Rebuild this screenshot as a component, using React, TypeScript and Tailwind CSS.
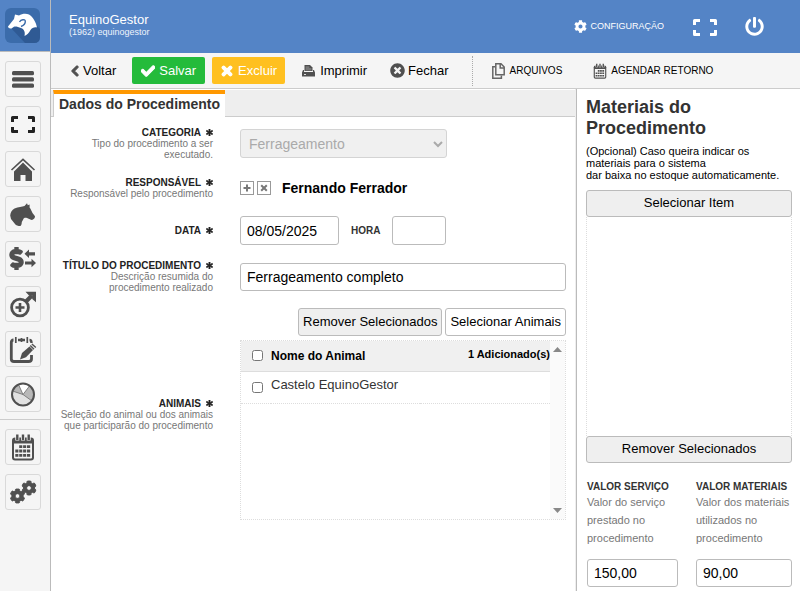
import { useState } from "react";
import type { ReactNode } from "react";
import { FaAsterisk, FaCheck, FaChevronLeft, FaCog, FaDollarSign, FaPowerOff, FaTimes, FaTimesCircle } from "react-icons/fa";

interface IconProps {
  size?: number;
}

function LogoIcon() {
  return (
    <svg width="35" height="35" viewBox="0 0 35 35" aria-hidden="true">
      <rect width="35" height="35" rx="6" fill="#3b6cab" />
      <path d="M6 20 L20 35 H29 Q35 35 35 29 V21 L30 16z" fill="#2f5a94" />
      <path d="M3 18.5 L9 11 L10 6.5 L14 7.5 C17 5.5 21 5 24 6.5 C28 9 31 14 32 19.5 C29 19 27 20 25.5 22 C24 25 22 27 19.5 28 C20.5 24 19 21 16 20 C13 19 10.5 18 8.5 19 C7.5 20 6.5 20.8 5.5 20.5 C4 20.3 3 19.5 3 18.5z" fill="#fff" />
      <path d="M14.5 14 C16 11.5 20 11 20.3 13 C20.5 15.5 18.5 17.5 16 18.5" fill="none" stroke="#3b6cab" strokeWidth="1.4" />
    </svg>
  );
}

function MenuIcon({ size = 28 }: IconProps) {
  return (
    <svg width={size} height={size} viewBox="0 0 28 28" fill="#505050" aria-hidden="true">
      <rect x="3" y="6" width="22" height="4.2" rx="1.5" />
      <rect x="3" y="12.3" width="22" height="4.2" rx="1.5" />
      <rect x="3" y="18.6" width="22" height="4.2" rx="1.5" />
    </svg>
  );
}

function ExpandIcon({ size = 28 }: IconProps) {
  return (
    <svg width={size} height={size} viewBox="0 0 28 28" fill="none" stroke="currentColor" strokeWidth="3" strokeLinejoin="round" aria-hidden="true">
      <path d="M3.5 12 V7.5 H9 M19 7.5 H24.5 V12 M24.5 17 V21.5 H19 M9 21.5 H3.5 V17" />
    </svg>
  );
}

function HomeIcon({ size = 28 }: IconProps) {
  return (
    <svg width={size} height={size} viewBox="0 0 28 28" fill="#505050" aria-hidden="true">
      <path d="M2.5 15 L14 4.3 L25.5 15" fill="none" stroke="#505050" strokeWidth="1.6" />
      <path d="M5 16.5 L14 7.6 L23 16.5 V26 H16.5 V20 H11.5 V26 H5z" />
    </svg>
  );
}

function HorseIcon({ size = 28 }: IconProps) {
  return (
    <svg width={size} height={size} viewBox="0 0 28 28" fill="#505050" aria-hidden="true">
      <path d="M18 3.3 L18.8 5.2 L20.6 4.6 L20.6 7.4 C22 9 22.5 11 23.5 13 L26 16.3 C26 18 25 19.4 23 20 C21.5 20 20.5 18.8 18 18 C16 17.5 14.5 18 14.2 19.5 L12.8 22 C12.8 24 12.3 25 11.5 26 C9 26 7 25.5 6 24 L2 19 L1.2 15.5 C1.5 12 3 10 5.5 8.5 C9.5 6.5 13 7 15.5 6z" />
    </svg>
  );
}

function FinanceIcon({ size = 28 }: IconProps) {
  return (
    <svg width={size} height={size} viewBox="0 0 28 28" fill="#505050" aria-hidden="true">
      <FaDollarSign x="-4" y="2" size={23} color="#505050" stroke="#505050" strokeWidth="34" />
      <path d="M15.5 8.8 L20 4.6 V7.3 H26 V10.4 H20 V13z" />
      <path d="M27 18 L22.5 13.8 V16.5 H16 V19.6 H22.5 V22.2z" />
    </svg>
  );
}

function BreedingIcon({ size = 28 }: IconProps) {
  return (
    <svg width={size} height={size} viewBox="0 0 28 28" fill="none" stroke="#505050" aria-hidden="true">
      <circle cx="11" cy="17.5" r="8.4" strokeWidth="2.8" />
      <path d="M6.5 17.5 H15.5 M11 13 V22" strokeWidth="2.6" />
      <path d="M17 11.5 L23 5.5" strokeWidth="4" />
      <path d="M16.5 1.8 H27 V12.3 L23.2 9 V5.5 H20z" fill="#505050" stroke="none" />
    </svg>
  );
}

function NotesIcon({ size = 28 }: IconProps) {
  return (
    <svg width={size} height={size} viewBox="0 0 28 28" fill="none" stroke="#505050" aria-hidden="true">
      <path d="M4.5 5 Q2.3 5 2.3 7.5 V24 Q2.3 26.5 5 26.5 H19.5 Q22.5 26.5 22.5 24 V20" strokeWidth="2.8" />
      <path d="M9 5 H16 M20.5 5 Q22.5 5 22.5 8" strokeWidth="2.4" />
      <path d="M6.8 2 V8 M12.5 3 V7 M18.3 2 V8" strokeWidth="1.7" />
      <path d="M11 24.5 L13 18 L20.5 11.5 L24 15 L17 22.3z" fill="#505050" stroke="none" />
      <path d="M21.3 10.5 L25 14.2 M22.9 8.9 L26.8 12.6" strokeWidth="1.4" />
    </svg>
  );
}

function ChartIcon({ size = 28 }: IconProps) {
  return (
    <svg width={size} height={size} viewBox="0 0 28 28" aria-hidden="true">
      <circle cx="14" cy="14.5" r="11" fill="#e2e2e2" />
      <path d="M14 14.5 L9.5 4.5 A11 11 0 0 1 20.5 6z" fill="#fff" />
      <path d="M14 14.5 L3.5 11 A11 11 0 0 1 9.5 4.5z" fill="#b8b8b8" />
      <path d="M14 14.5 L20.5 6 A11 11 0 0 1 23 21z" fill="#b8b8b8" />
      <path d="M14 14.5 L9.5 4.5 M14 14.5 L20.5 6 M14 14.5 L3.5 11 M14 14.5 L23 21" stroke="#777" strokeWidth="0.9" />
      <circle cx="14" cy="14.5" r="11" fill="none" stroke="#505050" strokeWidth="2" />
    </svg>
  );
}

function CalendarIcon({ size = 28 }: IconProps) {
  return (
    <svg width={size} height={size} viewBox="0 0 28 28" fill="#505050" aria-hidden="true">
      <path d="M3 7.5 Q3 4.5 6 4.5 H22 Q25 4.5 25 7.5 V24.5 Q25 27.5 22 27.5 H6 Q3 27.5 3 24.5z" />
      <path d="M5 10.5 H23 V24.5 Q23 25.5 22 25.5 H6 Q5 25.5 5 24.5z" fill="#f5f5f5" />
      <path d="M8.3 2 V7.5 M14 2 V7.5 M19.7 2 V7.5" stroke="#f5f5f5" strokeWidth="4" />
      <path d="M8.3 1.5 V7 M14 1.5 V7 M19.7 1.5 V7" stroke="#505050" strokeWidth="2.4" />
      <path d="M10.2 13.7 H22 M6.3 18 H22 M6.3 22.3 H22" stroke="#505050" strokeWidth="2.8" strokeDasharray="3.1 0.8" />
    </svg>
  );
}

function GearsIcon({ size = 28 }: IconProps) {
  return (
    <svg width={size} height={size} viewBox="0 0 28 28" aria-hidden="true">
      <FaCog x="1" y="10.5" size={15} color="#505050" stroke="#505050" strokeWidth="34" />
      <FaCog x="12.5" y="2.5" size={15} color="#505050" stroke="#505050" strokeWidth="34" />
    </svg>
  );
}

function PrinterIcon() {
  return (
    <svg width="13" height="12" viewBox="0 0 13 12" fill="#505050" aria-hidden="true">
      <path d="M2.5 0 H8 L10.5 2.5 V6 H2.5z" />
      <path d="M3.6 1.2 H7.3 V3 H9.4 V5.5 H3.6z" fill="#777" />
      <path d="M1 5 H2 V7 H11 V5 H12 L13 7.5 V11.5 H0 V7.5z" />
      <path d="M2 9.5 H4" stroke="#ddd" />
    </svg>
  );
}

function FilesIcon() {
  return (
    <svg width="13" height="16" viewBox="0 0 13 16" fill="none" stroke="#666" strokeWidth="1.5" aria-hidden="true">
      <path d="M3.8 0.8 H9 L12.2 4 V11.7 H3.8z" />
      <path d="M8.2 1 V5 H12" />
      <path d="M3 3.8 H0.8 V15.2 H9.4 V12.5" />
    </svg>
  );
}

const topNav = [
  { label: "Menu", icon: <MenuIcon /> },
  { label: "Tela cheia", icon: <ExpandIcon /> },
  { label: "Início", icon: <HomeIcon /> },
  { label: "Animais", icon: <HorseIcon /> },
  { label: "Financeiro", icon: <FinanceIcon /> },
  { label: "Reprodução", icon: <BreedingIcon /> },
  { label: "Anotações", icon: <NotesIcon /> },
  { label: "Relatórios", icon: <ChartIcon /> },
];

const bottomNav = [
  { label: "Agenda", icon: <CalendarIcon /> },
  { label: "Configurações", icon: <GearsIcon /> },
];

function NavButton({ label, icon }: { label: string; icon: ReactNode }) {
  return (
    <button type="button" aria-label={label}
      className="flex size-9 items-center justify-center rounded-[3px] border border-[#d9d9d9] text-[#222] hover:bg-white cursor-pointer">
      {icon}
    </button>
  );
}

interface FieldRowProps {
  title: string;
  hint?: string;
  htmlFor?: string;
  children: ReactNode;
}

function FieldRow({ title, hint, htmlFor, children }: FieldRowProps) {
  const caption = (
    <>
      <span className="flex items-center justify-end gap-[5px] font-bold text-[#222]">
        {title}
        <FaAsterisk size={7} stroke="currentColor" strokeWidth="50" />
      </span>
      {hint && <span className="block text-[#777]">{hint}</span>}
    </>
  );
  return (
    <div className="flex min-h-[26px] items-center gap-[27px]">
      <div className="w-[162px] shrink-0 pl-2 text-right text-[10px] leading-[11px]">
        {htmlFor ? <label htmlFor={htmlFor} className="block">{caption}</label> : caption}
      </div>
      <div className="min-w-0 flex-1">{children}</div>
    </div>
  );
}

export default function App() {
  const [date, setDate] = useState("08/05/2025");
  const [time, setTime] = useState("");
  const [title, setTitle] = useState("Ferrageamento completo");
  const [service, setService] = useState("150,00");
  const [materials, setMaterials] = useState("90,00");

  return (
    <div className="flex min-h-screen bg-white font-['Liberation_Sans',Arial,sans-serif] text-[13px] text-black">

      {/* Sidebar */}
      <nav className="w-[51px] shrink-0 border-r border-[#bbb] bg-[#f5f5f5]">
        <div className="flex h-13 items-center border-b border-[#bbb] bg-[#5484c6] pl-[5px]">
          <LogoIcon />
        </div>
        <div className="flex flex-col gap-[9px] px-[5px] pt-[9px] pb-[7px]">
          {topNav.map((n) => <NavButton key={n.label} label={n.label} icon={n.icon} />)}
        </div>
        <div className="flex flex-col gap-[9px] border-t border-[#ccc] px-[5px] pt-[9px]">
          {bottomNav.map((n) => <NavButton key={n.label} label={n.label} icon={n.icon} />)}
        </div>
      </nav>

      <div className="flex min-w-0 flex-1 flex-col">

        {/* Header */}
        <header className="flex h-[53px] items-center bg-[#5484c6] pr-9 pl-[18px] text-white">
          <div className="flex-1 pb-1">
            <div className="leading-[14px]">EquinoGestor</div>
            <div className="text-[9px] leading-[10px] text-[#eef3fb]">(1962) equinogestor</div>
          </div>
          <a href="#configuracao" className="mr-[27px] flex items-center gap-[3px] text-[9px]">
            <FaCog size={13} />
            CONFIGURAÇÃO
          </a>
          <button type="button" aria-label="Tela cheia" className="mr-[26px] cursor-pointer"><ExpandIcon /></button>
          <button type="button" aria-label="Sair" className="cursor-pointer"><FaPowerOff size={19} /></button>
        </header>

        {/* Toolbar */}
        <div className="flex h-9 items-center border-b border-[#ccc] bg-[#f5f5f5]">
          <button type="button" className="ml-[18px] flex items-center gap-0.5 cursor-pointer">
            <FaChevronLeft size={12} color="#505050" stroke="#505050" strokeWidth="50" />Voltar
          </button>
          <button type="button" className="ml-4 flex h-[27px] items-center gap-1 rounded-[2px] bg-[#24bb3b] px-[9px] text-white cursor-pointer">
            <FaCheck size={14} stroke="currentColor" strokeWidth="40" />Salvar
          </button>
          <button type="button" className="ml-[7px] flex h-[27px] items-center gap-1 rounded-[2px] bg-[#ffc020] px-2 text-white cursor-pointer">
            <FaTimes size={14} stroke="currentColor" strokeWidth="50" />Excluir
          </button>
          <button type="button" className="ml-[17px] flex items-center gap-[5px] cursor-pointer">
            <PrinterIcon />Imprimir
          </button>
          <button type="button" className="ml-[23px] flex items-center gap-[3px] cursor-pointer">
            <FaTimesCircle size={15} color="#505050" />Fechar
          </button>
          <div className="ml-[23px] flex h-[30px] items-center gap-[30px] border-l border-dotted border-[#aaa] pl-[19px] text-[10px]">
            <button type="button" className="flex items-center gap-[5px] cursor-pointer"><FilesIcon />ARQUIVOS</button>
            <button type="button" className="flex items-center gap-[3px] cursor-pointer"><CalendarIcon size={16} />AGENDAR RETORNO</button>
          </div>
        </div>

        <div className="flex flex-1">

          {/* Form */}
          <main className="min-w-0 flex-1 border-r border-[#eee]">
            <div className="mt-px flex h-[27px] border-b border-[#ccc] bg-[#eee] pl-0.5" role="tablist">
              <button type="button" role="tab" aria-selected="true"
                className="-mb-px border-t-4 border-l border-t-[#ff9800] border-l-[#ccc] bg-white px-[5px] pb-1 text-sm leading-4 font-bold text-[#333]">
                Dados do Procedimento
              </button>
            </div>

            <form className="flex flex-col gap-[15px] pt-2.5 pr-[9px]" onSubmit={(e) => e.preventDefault()}>
              <FieldRow title="CATEGORIA" hint="Tipo do procedimento a ser executado." htmlFor="categoria">
                <div className="relative w-[207px]">
                  <select id="categoria" disabled defaultValue="ferr"
                    className="h-[29px] w-full appearance-none rounded-[3px] border border-[#d4d4d4] bg-[#f0f0f0] px-2 text-sm text-[#aaa]">
                    <option value="ferr">Ferrageamento</option>
                  </select>
                  <svg width="10" height="7" viewBox="0 0 10 7" className="pointer-events-none absolute top-3 right-1" fill="none" stroke="#aaa" strokeWidth="2" aria-hidden="true">
                    <path d="M1 1 L5 5 L9 1" />
                  </svg>
                </div>
              </FieldRow>

              <FieldRow title="RESPONSÁVEL" hint="Responsável pelo procedimento">
                <div className="flex items-center gap-[3px]">
                  <button type="button" aria-label="Adicionar responsável" className="flex size-3.5 items-center justify-center border border-[#999] cursor-pointer">
                    <svg width="8" height="8" viewBox="0 0 8 8" stroke="#777" strokeWidth="2" aria-hidden="true"><path d="M0.5 4 H7.5 M4 0.5 V7.5" /></svg>
                  </button>
                  <button type="button" aria-label="Remover responsável" className="flex size-3.5 items-center justify-center border border-[#999] cursor-pointer">
                    <svg width="8" height="8" viewBox="0 0 8 8" stroke="#777" strokeWidth="2" aria-hidden="true"><path d="M1.2 1.2 L6.8 6.8 M6.8 1.2 L1.2 6.8" /></svg>
                  </button>
                  <span className="ml-2 text-sm font-bold">Fernando Ferrador</span>
                </div>
              </FieldRow>

              <FieldRow title="DATA" htmlFor="data">
                <div className="flex items-center">
                  <input id="data" type="text" value={date} onChange={(e) => setDate(e.target.value)}
                    className="h-[29px] w-[99px] rounded-[3px] border border-[#bbb] px-1.5 text-sm" />
                  <label htmlFor="hora" className="ml-3 text-[10px] font-bold text-[#333]">HORA</label>
                  <input id="hora" type="text" value={time} onChange={(e) => setTime(e.target.value)}
                    className="ml-3 h-[29px] w-[54px] rounded-[3px] border border-[#bbb] px-1.5 text-sm" />
                </div>
              </FieldRow>

              <FieldRow title="TÍTULO DO PROCEDIMENTO" hint="Descrição resumida do procedimento realizado" htmlFor="titulo">
                <input id="titulo" type="text" value={title} onChange={(e) => setTitle(e.target.value)}
                  className="block h-[28px] w-full rounded-[3px] border border-[#bbb] px-1.5 text-sm" />
              </FieldRow>

              <FieldRow title="ANIMAIS" hint="Seleção do animal ou dos animais que participarão do procedimento">
                <div className="flex justify-end gap-[3px]">
                  <button type="button" className="h-7 rounded-[3px] border border-[#bbb] bg-[#efefef] px-1 cursor-pointer">Remover Selecionados</button>
                  <button type="button" className="h-7 rounded-[3px] border border-[#bbb] bg-white px-1 cursor-pointer">Selecionar Animais</button>
                </div>
                <div className="mt-1 flex h-[180px] border border-dotted border-[#ddd]">
                  <div className="flex-1">
                    <table className="w-full border-collapse">
                      <thead>
                        <tr className="h-[30px] border-b border-[#ddd] bg-[#f0f0f0]">
                          <th className="w-[30px] pl-[11px] text-left">
                            <input type="checkbox" aria-label="Selecionar todos" className="block size-[11px]" />
                          </th>
                          <th className="text-left text-xs font-black">Nome do Animal</th>
                          <th className="pb-1 text-right text-[11px] font-bold">1 Adicionado(s)</th>
                        </tr>
                      </thead>
                      <tbody>
                        <tr className="h-8 border-b border-dotted border-[#ddd] text-[#333]">
                          <td className="pl-[11px]">
                            <input type="checkbox" id="animal-1" className="block size-[11px]" />
                          </td>
                          <td colSpan={2} className="pb-1"><label htmlFor="animal-1">Castelo EquinoGestor</label></td>
                        </tr>
                      </tbody>
                    </table>
                  </div>
                  <div className="flex w-[15px] flex-col items-center justify-between bg-[#fafafa] py-1.5">
                    <svg width="9" height="5" viewBox="0 0 9 5" fill="#888" aria-hidden="true"><path d="M0 5 L4.5 0 L9 5z" /></svg>
                    <svg width="9" height="5" viewBox="0 0 9 5" fill="#888" aria-hidden="true"><path d="M0 0 L4.5 5 L9 0z" /></svg>
                  </div>
                </div>
              </FieldRow>
            </form>
          </main>

          {/* Materials */}
          <aside className="w-[224px] shrink-0 border-l border-[#bbb] pt-2 pr-2 pl-[9px]">
            <h2 className="text-lg leading-[21px] font-bold text-[#333]">Materiais do Procedimento</h2>
            <p className="mt-1.5 text-[11px] leading-3">
              (Opcional) Caso queira indicar os<br />materiais para o sistema<br />dar baixa no estoque automaticamente.
            </p>
            <button type="button" className="mt-[9px] block h-[27px] w-full rounded-[3px] border border-[#bbb] bg-[#efefef] pb-0.5 cursor-pointer">Selecionar Item</button>
            <div className="h-[219px] border-x border-dotted border-[#ddd]" />
            <button type="button" className="block h-[27px] w-full rounded-[3px] border border-[#bbb] bg-[#efefef] pb-0.5 cursor-pointer">Remover Selecionados</button>
            <div className="mt-[18px] grid grid-cols-[91px_1fr] gap-[18px] pl-px">
              <div>
                <label htmlFor="valor-servico" className="block text-[10px] leading-3 font-bold whitespace-nowrap text-[#333]">VALOR SERVIÇO</label>
                <p className="text-[11px] leading-[18px] text-[#777]">Valor do serviço prestado no procedimento</p>
                <input id="valor-servico" type="text" value={service} onChange={(e) => setService(e.target.value)}
                  className="mt-3 block h-[28px] w-full rounded-[3px] border border-[#bbb] px-1.5 text-sm" />
              </div>
              <div>
                <label htmlFor="valor-materiais" className="block text-[10px] leading-3 font-bold whitespace-nowrap text-[#333]">VALOR MATERIAIS</label>
                <p className="text-[11px] leading-[18px] text-[#777]">Valor dos materiais utilizados no procedimento</p>
                <input id="valor-materiais" type="text" value={materials} onChange={(e) => setMaterials(e.target.value)}
                  className="mt-3 block h-[28px] w-full rounded-[3px] border border-[#bbb] px-1.5 text-sm" />
              </div>
            </div>
          </aside>
        </div>
      </div>
    </div>
  );
}
